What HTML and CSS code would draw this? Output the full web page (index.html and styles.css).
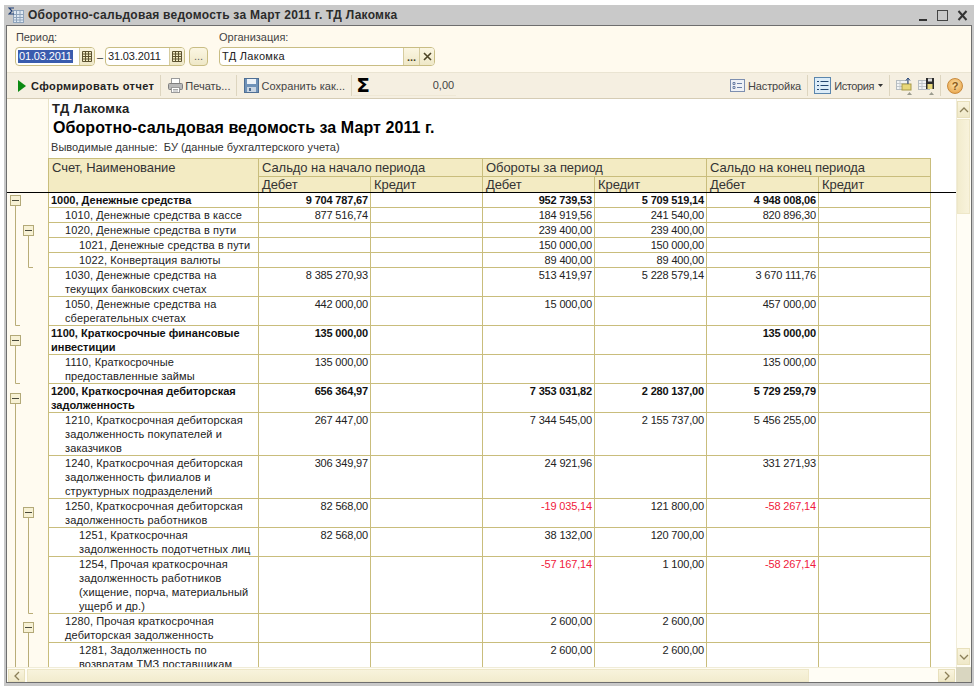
FILE: index.html
```html
<!DOCTYPE html>
<html lang="ru">
<head>
    <meta charset="UTF-8">
    <title>Оборотно-сальдовая ведомость</title>
    <link rel="stylesheet" href="styles.css">
</head>
<body>
<div class="window">
    <div class="titlebar">
        <svg class="title-icon" width="16" height="16" viewBox="0 0 16 16">
            <rect x="5.5" y="3.5" width="10" height="12" fill="#dfe8f2" stroke="#8ea3bb"/>
            <path d="M5 7.5h10M5 10.5h10M5 13h10M8.5 4v11M12 4v11" stroke="#8ea3bb" fill="none"/>
            <path d="M6 1H1l3 3-3 3h5" stroke="#1f3f76" stroke-width="1.2" fill="none"/>
        </svg>
        <span class="title-text">Оборотно-сальдовая ведомость за Март 2011 г. ТД Лакомка</span>
        <div class="win-btns">
            <svg width="50" height="12" viewBox="0 0 50 12">
                <path d="M0 11h8" stroke="#333" stroke-width="2"/>
                <rect x="18.5" y="1.5" width="10" height="10" fill="none" stroke="#444"/>
                <path d="M18.5 1.5h10" stroke="#444" stroke-width="1"/>
                <path d="M39.5 2l8 9M47.5 2l-8 9" stroke="#333" stroke-width="2" fill="none"/>
            </svg>
        </div>
    </div>
    <div class="inner">
        <form class="filters">
            <div class="group">
                <div class="lbl">Период:</div>
                <div class="row">
                    <div class="field date">
                        <span class="val"><span class="sel">01.03.2011</span></span>
                        <span class="fbtn cal"><svg width="10" height="11" viewBox="0 0 10 11"><path d="M.5.5h9v10h-9zM.5 3h9M.5 5.5h9M.5 8h9M3.5 1v9M6.5 1v9" fill="#f3ecc4" stroke="#5c5230"/></svg></span>
                    </div>
                    <span class="dash">–</span>
                    <div class="field date">
                        <span class="val">31.03.2011</span>
                        <span class="fbtn cal"><svg width="10" height="11" viewBox="0 0 10 11"><path d="M.5.5h9v10h-9zM.5 3h9M.5 5.5h9M.5 8h9M3.5 1v9M6.5 1v9" fill="#f3ecc4" stroke="#5c5230"/></svg></span>
                    </div>
                    <div class="dots-btn">...</div>
                </div>
            </div>
            <div class="group org">
                <div class="lbl org-lbl">Организация:</div>
                <div class="row">
                    <div class="field org-field">
                        <span class="val org-val">ТД Лакомка</span>
                        <span class="fbtn choose">...</span>
                        <span class="fbtn clear"><svg width="9" height="9" viewBox="0 0 9 9"><path d="M1 1l7 7M8 1L1 8" stroke="#4d4526" stroke-width="1.6"/></svg></span>
                    </div>
                </div>
            </div>
        </form>

        <div class="toolbar">
            <svg class="run-icon" width="8" height="12" viewBox="0 0 8 12"><path d="M0 0l8 6-8 6z" fill="#0b8a12"/></svg>
            <span class="tb-text run">Сформировать отчет</span>
            <span class="sep"></span>
            <svg class="tb-icon print" width="15" height="15" viewBox="0 0 15 15">
                <rect x="3.5" y=".5" width="8" height="5" fill="#fff" stroke="#9a9a9a"/>
                <rect x=".5" y="5.5" width="14" height="6" rx="1" fill="#b9b9b9" stroke="#808080"/>
                <rect x="3.5" y="9.5" width="8" height="5" fill="#fff" stroke="#9a9a9a"/>
                <path d="M5 11.5h5M5 13h5" stroke="#aaa"/>
            </svg>
            <span class="tb-text print-text">Печать...</span>
            <span class="sep"></span>
            <svg class="tb-icon save" width="15" height="15" viewBox="0 0 15 15">
                <rect x=".5" y=".5" width="14" height="14" fill="#6f92b8" stroke="#4f6f94"/>
                <rect x="3" y="1" width="9" height="5" fill="#eef3f8"/>
                <rect x="3" y="9" width="9" height="5" fill="#c9d5e2"/>
                <rect x="5" y="10" width="2" height="3" fill="#4f6f94"/>
            </svg>
            <span class="tb-text save-text">Сохранить как...</span>
            <span class="sep"></span>
            <div class="sum">
                <span class="sigma">Σ</span>
                <span class="sum-val">0,00</span>
            </div>

            <div class="tb-right">
                <svg class="tb-icon" width="15" height="13" viewBox="0 0 15 13">
                    <rect x=".5" y=".5" width="14" height="12" fill="#eef1f6" stroke="#7d8fb0"/>
                    <path d="M3 3.500h2v2H3zM3 7.500h2v2H3z" fill="none" stroke="#6b7fa5"/>
                    <path d="M7 4.500h5M7 8.500h5" stroke="#6b7fa5"/>
                </svg>
                <span class="tb-text nastr">Настройка</span>
                <span class="sep"></span>
                <svg class="tb-icon hist" width="17" height="17" viewBox="0 0 17 17">
                    <rect x=".5" y=".5" width="16" height="16" fill="#dcecf8" stroke="#5b86ad"/>
                    <path d="M3 4.500h2M3 8.500h2M3 12.500h2M6.500 4.500h8M6.500 8.500h8M6.500 12.500h8" stroke="#24466f" stroke-width="1.200"/>
                </svg>
                <span class="tb-text hist-text">История</span>
                <svg class="caret" width="5" height="3" viewBox="0 0 5 3"><path d="M0 0h5L2.500 3z" fill="#333"/></svg>
                <span class="sep"></span>
                <svg class="tb-icon up" width="16" height="18" viewBox="0 0 16 18">
                    <rect x=".5" y="3.500" width="11" height="9" fill="#f2f4f5" stroke="#b5bcc0"/>
                    <path d="M1 6.500h10M1 9.500h10M4 4v8" stroke="#c2c8cc"/>
                    <rect x="6" y="7" width="9" height="6" fill="#e8d87a" stroke="#a89a4a"/>
                    <path d="M12 7V2M10 3.500L12 1l2 2.500" stroke="#1f3f76" fill="none"/>
                    <path d="M11 18l2.500-3 2.500 3z" fill="#9b9b8e"/>
                </svg>
                <svg class="tb-icon down" width="16" height="18" viewBox="0 0 16 18">
                    <rect x=".5" y="3.500" width="11" height="9" fill="#f2f4f5" stroke="#b5bcc0"/>
                    <path d="M1 6.500h10M1 9.500h10M4 4v8" stroke="#c2c8cc"/>
                    <rect x="8" y="1" width="8" height="11" fill="#2c2c2c"/>
                    <rect x="10" y="1.500" width="4" height="3" fill="#ddd"/>
                    <rect x="9.500" y="7" width="5" height="5" fill="#e8d87a"/>
                    <path d="M11 18l2.500-3 2.500 3z" fill="#9b9b8e"/>
                </svg>
                <span class="sep"></span>
                <span class="help">?</span>
            </div>
        </div>

        <div class="report">
            <div class="report-main">
                <svg class="gutter" width="41" height="568" viewBox="0 0 41 568">
                    <g fill="none" stroke="#b9ad78">
                        <path d="M8.500 107V226.500H13"/>
                        <path d="M21.500 137V168.500H26"/>
                        <path d="M8.500 247V284.500H13"/>
                        <path d="M8.500 305V568"/>
                        <path d="M21.500 419V514.500H26"/>
                        <path d="M21.500 534V568"/>
                    </g>
                    <g fill="#f7f1d4" stroke="#b3a978">
                        <rect x="3.500" y="96.500" width="10" height="10"/>
                        <rect x="16.500" y="126.500" width="10" height="10"/>
                        <rect x="3.500" y="236.500" width="10" height="10"/>
                        <rect x="3.500" y="294.500" width="10" height="10"/>
                        <rect x="16.500" y="408.500" width="10" height="10"/>
                        <rect x="16.500" y="523.500" width="10" height="10"/>
                    </g>
                    <g stroke="#4a4a3c">
                        <path d="M5 101.500h7M18 131.500h7M5 241.500h7M5 299.500h7M18 413.500h7M18 528.500h7"/>
                    </g>
                </svg>
                <div class="sheet">
                    <div class="sheet-head">
                        <div class="org-name">ТД Лакомка</div>
                        <div class="doc-title">Оборотно-сальдовая ведомость за Март 2011 г.</div>
                        <div class="doc-note">Выводимые данные:&nbsp; БУ (данные бухгалтерского учета)</div>
                    </div>
                    <table class="grid">
                        <colgroup><col class="c-name"><col><col><col><col><col><col></colgroup>
                        <thead>
                            <tr class="h1">
                                <th rowspan="2" class="h-name">Счет, Наименование</th>
                                <th colspan="2">Сальдо на начало периода</th>
                                <th colspan="2">Обороты за период</th>
                                <th colspan="2">Сальдо на конец периода</th>
                            </tr>
                            <tr class="h2">
                                <th>Дебет</th><th>Кредит</th><th>Дебет</th><th>Кредит</th><th>Дебет</th><th>Кредит</th>
                            </tr>
                        </thead>
                        <tbody>
                            <tr class="b"><td class="n">1000, Денежные средства</td><td>9 704 787,67</td><td></td><td>952 739,53</td><td>5 709 519,14</td><td>4 948 008,06</td><td></td></tr>
                            <tr><td class="n l1">1010, Денежные средства в кассе</td><td>877 516,74</td><td></td><td>184 919,56</td><td>241 540,00</td><td>820 896,30</td><td></td></tr>
                            <tr><td class="n l1">1020, Денежные средства в пути</td><td></td><td></td><td>239 400,00</td><td>239 400,00</td><td></td><td></td></tr>
                            <tr><td class="n l2">1021, Денежные средства в пути</td><td></td><td></td><td>150 000,00</td><td>150 000,00</td><td></td><td></td></tr>
                            <tr><td class="n l2">1022, Конвертация валюты</td><td></td><td></td><td>89 400,00</td><td>89 400,00</td><td></td><td></td></tr>
                            <tr><td class="n l1">1030, Денежные средства на<br>текущих банковских счетах</td><td>8 385 270,93</td><td></td><td>513 419,97</td><td>5 228 579,14</td><td>3 670 111,76</td><td></td></tr>
                            <tr><td class="n l1">1050, Денежные средства на<br>сберегательных счетах</td><td>442 000,00</td><td></td><td>15 000,00</td><td></td><td>457 000,00</td><td></td></tr>
                            <tr class="b"><td class="n">1100, Краткосрочные финансовые<br>инвестиции</td><td>135 000,00</td><td></td><td></td><td></td><td>135 000,00</td><td></td></tr>
                            <tr><td class="n l1">1110, Краткосрочные<br>предоставленные займы</td><td>135 000,00</td><td></td><td></td><td></td><td>135 000,00</td><td></td></tr>
                            <tr class="b"><td class="n">1200, Краткосрочная дебиторская<br>задолженность</td><td>656 364,97</td><td></td><td>7 353 031,82</td><td>2 280 137,00</td><td>5 729 259,79</td><td></td></tr>
                            <tr><td class="n l1">1210, Краткосрочная дебиторская<br>задолженность покупателей и<br>заказчиков</td><td>267 447,00</td><td></td><td>7 344 545,00</td><td>2 155 737,00</td><td>5 456 255,00</td><td></td></tr>
                            <tr><td class="n l1">1240, Краткосрочная дебиторская<br>задолженность филиалов и<br>структурных подразделений</td><td>306 349,97</td><td></td><td>24 921,96</td><td></td><td>331 271,93</td><td></td></tr>
                            <tr><td class="n l1">1250, Краткосрочная дебиторская<br>задолженность работников</td><td>82 568,00</td><td></td><td class="neg">-19 035,14</td><td>121 800,00</td><td class="neg">-58 267,14</td><td></td></tr>
                            <tr><td class="n l2">1251, Краткосрочная<br>задолженность подотчетных лиц</td><td>82 568,00</td><td></td><td>38 132,00</td><td>120 700,00</td><td></td><td></td></tr>
                            <tr><td class="n l2">1254, Прочая краткосрочная<br>задолженность работников<br>(хищение, порча, материальный<br>ущерб и др.)</td><td></td><td></td><td class="neg">-57 167,14</td><td>1 100,00</td><td class="neg">-58 267,14</td><td></td></tr>
                            <tr><td class="n l1">1280, Прочая краткосрочная<br>дебиторская задолженность</td><td></td><td></td><td>2 600,00</td><td>2 600,00</td><td></td><td></td></tr>
                            <tr><td class="n l2">1281, Задолженность по<br>возвратам ТМЗ поставщикам</td><td></td><td></td><td>2 600,00</td><td>2 600,00</td><td></td><td></td></tr>
                        </tbody>
                    </table>
                </div>
                <div class="freeze-line"></div>
            </div>
            <div class="vscroll">
                <div class="sb-btn"><svg width="10" height="6" viewBox="0 0 10 6"><path d="M1 5l4-4 4 4" fill="none" stroke="#8b7f58" stroke-width="1.300"/></svg></div>
                <div class="v-thumb"></div>
                <div class="sb-fill"></div>
                <div class="sb-btn"><svg width="10" height="6" viewBox="0 0 10 6"><path d="M1 1l4 4 4-4" fill="none" stroke="#8b7f58" stroke-width="1.300"/></svg></div>
            </div>
            <div class="hscroll">
                <div class="sb-btn"><svg width="6" height="10" viewBox="0 0 6 10"><path d="M5 1L1 5l4 4" fill="none" stroke="#8b7f58" stroke-width="1.300"/></svg></div>
                <div class="h-thumb"></div>
                <div class="sb-fill"></div>
                <div class="sb-btn"><svg width="6" height="10" viewBox="0 0 6 10"><path d="M1 1l4 4-4 4" fill="none" stroke="#8b7f58" stroke-width="1.300"/></svg></div>
            </div>
            <div class="corner"></div>
        </div>
    </div>
</div>
</body>
</html>
```

FILE: styles.css
```css
* {
    box-sizing: border-box;
}
body {
    margin: 0;
    background-color: white;
    font-family: "Liberation Sans", Arial, sans-serif;
    font-size: 11px;
    color: #222;
}
.window {
    margin: 5px 4px 0;
    width: 970px;
    height: 681px;
    padding: 0 2px 3px;
    background-color: #c9c9c9;
    display: flex;
    flex-direction: column;
}

/* title */
.titlebar {
    height: 20px;
    display: flex;
    align-items: center;
    flex-shrink: 0;
}
.title-icon {
    margin-left: 2px;
    margin-right: 4px;
}
.title-text {
    font-weight: bold;
    font-size: 12px;
    letter-spacing: 0.24px;
    color: #2b2b2b;
}
.win-btns {
    margin-left: auto;
    margin-right: 3px;
    display: flex;
}

.inner {
    flex: 1;
    border: 1px solid #6e6e6e;
    display: flex;
    flex-direction: column;
    min-height: 0;
}

/* filters */
.filters {
    height: 46px;
    flex-shrink: 0;
    background-color: #fffaee;
    display: flex;
    padding: 4px 0 0 8px;
    gap: 11px;
}
.lbl {
    height: 14px;
    line-height: 14px;
    padding-left: 1px;
    margin-bottom: 3px;
    color: #444;
    letter-spacing: -0.1px;
}
.org-lbl {
    padding-left: 0;
    letter-spacing: 0;
}
.row {
    display: flex;
    align-items: center;
}
.field {
    height: 19px;
    border: 1px solid #c9bd84;
    border-radius: 4px;
    background-color: white;
    display: flex;
    overflow: hidden;
}
.date {
    width: 80px;
}
.val {
    flex: 1;
    line-height: 17px;
    padding-left: 2px;
    color: #222;
    letter-spacing: -0.15px;
}
.org-val {
    letter-spacing: 0.3px;
}
.sel {
    background-color: #3a5cae;
    color: white;
    display: inline-block;
    line-height: 13px;
    padding: 0 1px;
}
.fbtn {
    background: linear-gradient(#fbf6e2, #efe8c8);
    border-left: 1px solid #d6cc9f;
    display: flex;
    align-items: center;
    justify-content: center;
}
.cal {
    width: 15px;
}
.dash {
    width: 10px;
    text-align: center;
    color: #333;
}
.dots-btn {
    width: 19px;
    height: 19px;
    margin-left: 4px;
    border: 1px solid #c9bd84;
    border-radius: 4px;
    background: linear-gradient(#fbf6e2, #efe8c8);
    text-align: center;
    line-height: 17px;
    color: #666;
}
.org-field {
    width: 216px;
}
.choose {
    width: 16px;
    font-weight: bold;
    color: #4d4526;
}
.clear {
    width: 15px;
}

/* toolbar */
.toolbar {
    height: 27px;
    flex-shrink: 0;
    background-color: #f5efe1;
    border-top: 1px solid #eae4d2;
    border-bottom: 1px solid #d5ccb5;
    display: flex;
    align-items: center;
    padding: 0 8px 0 11px;
}
.run-icon {
    margin-right: 5px;
}
.tb-text {
    color: #444;
    white-space: nowrap;
}
.run {
    font-weight: bold;
    color: #222;
    letter-spacing: 0.38px;
}
.sep {
    width: 1px;
    height: 21px;
    background-color: #ddd5bf;
    margin: 0 6px;
    flex-shrink: 0;
}
.print, .save {
    margin-left: 1px;
    margin-right: 2px;
}
.print-text {
    letter-spacing: 0;
}
.save-text {
    letter-spacing: 0.05px;
}
.sum {
    width: 103px;
    margin-left: -5px;
    height: 21px;
    display: flex;
    align-items: center;
    justify-content: space-between;
    padding: 0 2px 0 3px;
    border-bottom: 1px solid #efe8d6;
}
.sigma {
    font-family: "DejaVu Sans", sans-serif;
    font-size: 20px;
    line-height: 20px;
    font-weight: bold;
    color: black;
}
.sum-val {
    color: #444;
}
.tb-right {
    margin-left: auto;
    display: flex;
    align-items: center;
}
.nastr {
    margin-left: 3px;
    letter-spacing: -0.1px;
}
.hist-text {
    margin-left: 3px;
    letter-spacing: -0.4px;
}
.caret {
    margin-left: 4px;
}
.down {
    margin-left: 6px;
}
.help {
    width: 16px;
    height: 16px;
    border-radius: 50%;
    background: radial-gradient(circle at 50% 40%, #fbe2a8, #e59a3c);
    border: 1px solid #c98a3c;
    color: #8a5a1a;
    font-weight: bold;
    font-size: 11px;
    line-height: 14px;
    text-align: center;
}

/* report */
.report {
    flex: 1;
    min-height: 0;
    display: grid;
    grid-template-columns: 949px 15px;
    grid-template-rows: 568px 15px;
    background-color: white;
}
.report-main {
    display: flex;
    overflow: hidden;
    position: relative;
}
.gutter {
    flex-shrink: 0;
    background-color: #fffbf0;
}
.sheet {
    flex: 1;
    min-width: 0;
}
.sheet-head {
    height: 59px;
    padding: 3px 0 0 3px;
    border-left: 1px solid #e9e3c8;
    overflow: hidden;
}
.org-name {
    font-weight: bold;
    font-size: 13px;
    letter-spacing: 0.3px;
    line-height: 14px;
    color: #222;
}
.doc-title {
    font-weight: bold;
    font-size: 16px;
    letter-spacing: 0.07px;
    line-height: 24px;
    color: black;
    margin-left: 1px;
}
.doc-note {
    line-height: 15px;
    letter-spacing: 0.05px;
    margin-left: -1px;
    color: #333;
}
.freeze-line {
    position: absolute;
    left: 0;
    right: 0;
    top: 93px;
    height: 1px;
    background-color: black;
}

.grid {
    table-layout: fixed;
    width: 883px;
    border-collapse: separate;
    border-spacing: 0;
}
.c-name {
    width: 211px;
}
.grid th {
    background-color: #f3ebc3;
    border-right: 1px solid #c9bd7c;
    border-bottom: 1px solid #c9bd7c;
    font-weight: normal;
    font-size: 13px;
    letter-spacing: -0.07px;
    text-align: left;
    vertical-align: top;
    padding: 0 3px;
    line-height: 15px;
    color: #333;
}
.h1 th {
    border-top: 1px solid #c9bd7c;
    padding-top: 1px;
    padding-bottom: 1px;
    height: 19px;
}
.h-name {
    border-left: 1px solid #c9bd7c;
}
.grid td {
    border-right: 1px solid #c9bd7c;
    border-bottom: 1px solid #c9bd7c;
    line-height: 14px;
    padding: 0 2px;
    text-align: right;
    vertical-align: top;
    white-space: nowrap;
    letter-spacing: -0.17px;
}
.grid td.n {
    border-left: 1px solid #c9bd7c;
    text-align: left;
    padding-left: 2px;
    letter-spacing: 0.12px;
}
.grid td.l1 {
    padding-left: 16px;
}
.grid td.l2 {
    padding-left: 30px;
}
.b td {
    font-weight: bold;
    color: #111;
}
.grid .b td.n {
    letter-spacing: 0;
}
.grid td.neg {
    color: #f0203c;
}

/* scrollbars */
.vscroll {
    background-color: #fffdf5;
    display: flex;
    flex-direction: column;
    padding: 2px 1px 2px 0;
    border-left: 1px solid #f0ecd8;
}
.v-thumb {
    height: 95px;
    margin-top: 1px;
    background: linear-gradient(90deg, #f2ecce, #f8f3dc);
    border: 1px solid #eee7c8;
}
.sb-fill {
    flex: 1;
}
.sb-btn {
    flex: 0 0 17px;
    background: linear-gradient(#f9f4de, #efe8c8);
    border: 1px solid #e8e0bc;
    display: flex;
    align-items: center;
    justify-content: center;
}
.hscroll {
    background-color: #fffdf5;
    display: flex;
    padding: 1px 1px 0 1px;
    border-top: 1px solid #f0ecd8;
}
.h-thumb {
    width: 782px;
    margin-left: 2px;
    background: linear-gradient(#f8f3dc, #f2ecce);
    border: 1px solid #eee7c8;
}
.corner {
    background-color: #d9d6c0;
}
```
